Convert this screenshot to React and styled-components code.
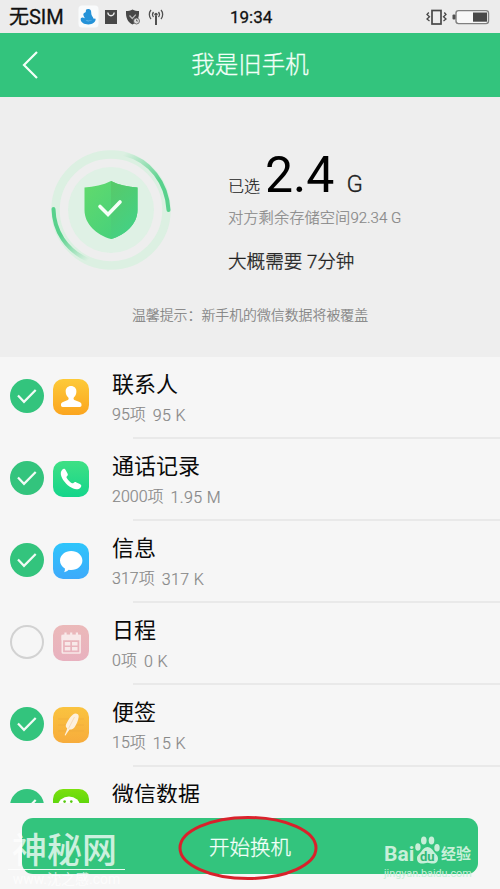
import React from "react";
import styled, { createGlobalStyle } from "styled-components";

const rows = [
  { title: "联系人", count: "95项", size: "95 K", icon: "contact", checked: true },
  { title: "通话记录", count: "2000项", size: "1.95 M", icon: "phone", checked: true },
  { title: "信息", count: "317项", size: "317 K", icon: "message", checked: true },
  { title: "日程", count: "0项", size: "0 K", icon: "calendar", checked: false },
  { title: "便签", count: "15项", size: "15 K", icon: "note", checked: true },
  { title: "微信数据", count: "", size: "", icon: "wechat", checked: true },
];

const tiles = {
  contact: ["#fdca38", "#fba51f"],
  phone: ["#3fe084", "#14d58b"],
  message: ["#2ec5fb", "#3eaafb"],
  calendar: ["#ebb9b9", "#e8b1bf"],
  note: ["#fac33f", "#f7ac3c"],
  wechat: ["#7be00e", "#35c90a"],
};

const Glyph = ({ name }) => (
  <svg width="36" height="36" viewBox="0 0 36 36">
    {name === "contact" && (
      <path
        fill="#fff"
        d="M18 7c3.300 0 5.600 2.300 5.400 5.700-.1 2.400-1 4.300-2.400 5.500-.7.700-.6 2.200.4 2.700l5.100 2.100c1.300.6 2 1.400 2 2.700v.6c0 1.100-.6 1.700-1.700 1.700H9.700C8.600 28 8 27.400 8 26.300v-.6c0-1.300.7-2.100 2-2.700l4.800-2.100c1-.5 1.100-2 .3-2.700-1.400-1.200-2.300-3.100-2.400-5.500C12.500 9.300 14.700 7 18 7z"
      />
    )}
    {name === "phone" && (
      <path
        fill="#fff"
        d="M9.200 8.800c1.600-1.600 2.800-1 3.700.6l1.600 3c.7 1.200.3 2-.6 2.900-.6.600-.5 1.100 0 2 1.100 1.900 2.700 3.500 4.600 4.700.9.500 1.500.5 2-.1.900-.9 1.700-1.200 2.900-.5l3.400 1.700c1.700.9 2.100 2.100.6 3.600-1.800 1.800-4.500 2-7.200.8C15 25.200 10.700 20.800 8.500 15.700c-1.100-2.600-1-5.200.7-6.900z"
      />
    )}
    {name === "message" && (
      <path
        fill="#fff"
        d="M18.200 8C12 8 7 12.200 7 17.500c0 3.300 1.900 6.200 4.900 7.900.1 1.600-.2 2.800-.9 3.800 2-.4 3.700-1.300 4.800-2.400.8.200 1.600.2 2.400.2 6.200 0 11.200-4.200 11.200-9.500S24.400 8 18.200 8z"
      />
    )}
    {name === "calendar" && (
      <g fill="none" stroke="#f8e9e9" strokeWidth="1.600">
        <rect x="9.300" y="10.500" width="17.800" height="17.500" rx="0.800" />
        <path fill="#f8e9e9" d="M9.300 10.500h17.800v4H9.300z" />
        <path strokeWidth="2.200" d="M12.500 7.500v4M18.200 7.500v4M23.900 7.500v4" />
        <path
          fill="#f8e9e9"
          stroke="none"
          d="M11.800 17h5.500v3.600h-5.500zM19 17h5.500v3.600H19zM11.800 22h5.500v3.500h-5.500zM19 22h5.500v3.500H19z"
        />
      </g>
    )}
    {name === "note" && (
      <g>
        <path stroke="#e9a33c" strokeWidth="0.700" opacity="0.6" d="M5 12h26M5 18h26M5 24h26" />
        <path
          fill="#fdf0dc"
          d="M20 7.500c2.300-1.800 6-.8 5.700 2.300-.5 3.900-2 7.200-4.100 10.400-1.100 1.600-3.100 2.400-5 2.300-1.600 2-2.800 3.900-4.100 6-.8-.1-.9-.4-.6-1 1.100-2.400 1.900-4.300 2.300-6.200-2-1.300-1.700-3.200-.6-5.100 1.800-3.500 3.700-6.600 6.400-8.700z"
        />
        <path stroke="#f1cfa4" strokeWidth="0.600" d="M21.500 10 15.500 21.500" />
      </g>
    )}
    {name === "wechat" && (
      <g>
        <ellipse cx="16" cy="17" rx="11" ry="9.500" fill="#fff" />
        <circle cx="11.600" cy="12.600" r="1.300" fill="#58c911" />
        <circle cx="18.300" cy="12.600" r="1.300" fill="#58c911" />
      </g>
    )}
  </svg>
);

const Row = ({ item }) => (
  <RowBox>
    <Check $on={item.checked}>
      {item.checked && (
        <svg width="34" height="34" viewBox="0 0 34 34">
          <path d="M8 16.500l6 6.300L25.700 11" fill="none" stroke="#f2fbf6" strokeWidth="2.200" />
        </svg>
      )}
    </Check>
    <Tile $from={tiles[item.icon][0]} $to={tiles[item.icon][1]}>
      <Glyph name={item.icon} />
    </Tile>
    <RowText>
      <RowTitle>{item.title}</RowTitle>
      <RowInfo>
        <span>{item.count}</span>
        <Size>{item.size}</Size>
      </RowInfo>
    </RowText>
  </RowBox>
);

const StatusIcons = () => (
  <svg width="88" height="24" viewBox="0 0 88 24">
    <rect x="0.500" y="0.500" width="20" height="22" rx="3.500" fill="#f9fbfc" />
    <path
      fill="#2492d8"
      d="M8 4.800C9 3.500 12.500 3.600 13 6c.4 1.800.1 2.500.6 3.900.5 1.400 1.600 2 1.700 3.700l2.300.1c.3 3.400-3 5.700-7.200 5.700-4.400 0-7.600-1.900-7.700-4.900-.1-1.500 1-2.200 2.200-1.900.9.200 1.100.9 1.800.5-.5-1.300-1.700-2.400-1.300-4 .3-1.400 1.900-1.200 2.400-2.300z"
    />
    <path fill="#8cc8ec" d="M7.600 15c2 .9 4.200.9 6.300.1-1.200 1.500-5 1.600-6.300-.1z" />
    <path fill="#484848" d="M27 5h12v14H27z" />
    <path d="M29.800 7.500c.4 4.300 6 4.300 6.400 0" fill="none" stroke="#ececec" strokeWidth="1.300" />
    <path
      fill="#484848"
      d="M54.500 4.500c2 1.200 4.100 1.600 6.500 1.600.3 6.800-1.500 11-6.500 13.400C49.500 17.100 47.700 12.900 48 6.100c2.400 0 4.500-.4 6.500-1.600z"
    />
    <path d="M51.500 10.500l2.800 3 3.500-3.800" fill="none" stroke="#bbb" strokeWidth="1.200" />
    <circle cx="58.500" cy="16" r="3" fill="#ddd" stroke="#555" strokeWidth="0.800" />
    <path d="M58.500 14.500V16h1.500" fill="none" stroke="#555" strokeWidth="0.800" />
    <g fill="none" stroke="#505050" strokeWidth="1.300">
      <path d="M73 5c-2.200 2.400-2.200 6.600 0 9M83 5c2.200 2.400 2.200 6.600 0 9" />
      <path d="M75.500 7c-1.200 1.500-1.200 3.500 0 5M80.500 7c1.200 1.500 1.200 3.500 0 5" />
      <path strokeWidth="2" d="M78 11v9" />
    </g>
    <circle cx="78" cy="9.300" r="1.600" fill="#505050" />
  </svg>
);

const PowerIcons = () => (
  <svg width="66" height="20" viewBox="0 0 66 20">
    <g fill="none" stroke="#484848">
      <rect x="7" y="3.500" width="9" height="13.500" strokeWidth="1.700" />
      <path d="M3.800 5.500 2 7.500l2.500 2.200L2 12l2.500 2M19.300 5.500l1.700 2-2.500 2.200L21 12l-2.500 2" strokeWidth="1.300" />
      <rect x="31" y="3.600" width="32.500" height="13" rx="2.500" stroke="#808080" fill="#f8f8f8" strokeWidth="1.400" />
    </g>
    <rect x="27.500" y="7.500" width="3" height="5" rx="1" fill="#505050" />
    <rect x="48" y="5.500" width="14" height="9.200" fill="#484848" />
  </svg>
);

const ShieldArt = () => (
  <svg width="124" height="124" viewBox="0 0 124 124">
    <defs>
      <linearGradient id="leaf" x1="0" y1="0" x2="1" y2="1">
        <stop offset="0" stopColor="#62da6c" />
        <stop offset="1" stopColor="#3fce80" />
      </linearGradient>
      <linearGradient id="leafDark" x1="0" y1="0" x2="0.500" y2="1">
        <stop offset="0" stopColor="#58c968" />
        <stop offset="1" stopColor="#44d184" />
      </linearGradient>
      <linearGradient id="arcRight" x1="0" y1="0" x2="0.700" y2="1">
        <stop offset="0" stopColor="#58d18c" stopOpacity="0" />
        <stop offset="0.700" stopColor="#58d18c" />
      </linearGradient>
      <linearGradient id="arcLeft" x1="1" y1="1" x2="0.300" y2="0">
        <stop offset="0" stopColor="#58d18c" stopOpacity="0" />
        <stop offset="0.700" stopColor="#58d18c" />
      </linearGradient>
    </defs>
    <circle cx="62" cy="62" r="55.500" fill="none" stroke="#dcf0e2" strokeWidth="8.500" />
    <circle cx="62" cy="62" r="43" fill="#dff1e5" />
    <path d="M75 6c26 6 43 29 44.500 56" fill="none" stroke="url(#arcRight)" strokeWidth="4" strokeLinecap="round" />
    <path d="M4.500 61C5 83 17 102 39 112" fill="none" stroke="url(#arcLeft)" strokeWidth="4" strokeLinecap="round" />
    <path
      fill="url(#leaf)"
      d="M62 33c8 4 17 6 26.500 6.500V62c0 14-12 25-26.500 29-14.500-4-26.500-15-26.500-29V39.500C45 39 54 37 62 33z"
    />
    <path fill="url(#leafDark)" d="M62 33c8 4 17 6 26.500 6.500V62c0 14-12 25-26.500 29z" />
    <path d="M51 58.500l8 8L71 54" fill="none" stroke="#f6fff8" strokeWidth="3.600" strokeLinecap="round" />
  </svg>
);

const Paw = () => (
  <svg width="25" height="28" viewBox="0 0 25 28">
    <g fill="#c8efd9">
      <ellipse cx="8.800" cy="4.500" rx="2.800" ry="4" />
      <ellipse cx="16.500" cy="4.500" rx="2.800" ry="4" />
      <ellipse cx="2.900" cy="11" rx="2.700" ry="3.800" />
      <ellipse cx="22" cy="11.800" rx="2.700" ry="3.800" />
      <path d="M12.500 11c3 0 4.700 2.300 6 4.300 2 2.800 4.500 4 4.500 7.200 0 3-2 5-5 5-2 0-3.600-.8-5.500-.8s-3.500.8-5.500.8c-3 0-5-2-5-5 0-3.200 2.500-4.400 4.500-7.200 1.300-2 3-4.300 6-4.300z" />
    </g>
  </svg>
);

const App = () => {
  return (
    <>
      <GlobalStyle />
      <Phone>
        <StatusBar>
          <Carrier>无SIM</Carrier>
          <StatusIcons />
          <Clock>19:34</Clock>
          <PowerIcons />
        </StatusBar>
        <Header>
          <svg width="18" height="30" viewBox="0 0 18 30">
            <path d="M16 2 3 15l13 13" fill="none" stroke="#f3fff8" strokeWidth="2.200" />
          </svg>
          <HeaderTitle>我是旧手机</HeaderTitle>
        </Header>
        <Summary>
          <SummaryMain>
            <ShieldArt />
            <Figures>
              <Selected>
                <small>已选</small>
                <strong>2.4</strong>
                <span>G</span>
              </Selected>
              <Remaining>
                对方剩余存储空间<span>92.34 G</span>
              </Remaining>
              <Estimate>大概需要 7分钟</Estimate>
            </Figures>
          </SummaryMain>
          <Tip>温馨提示：新手机的微信数据将被覆盖</Tip>
        </Summary>
        <List>
          {rows.map((item) => (
            <Row key={item.title} item={item} />
          ))}
        </List>
        <Footer>
          <StartButton>开始换机</StartButton>
          <Ring viewBox="0 0 140 68">
            <ellipse cx="70" cy="34" rx="68" ry="30.500" fill="none" stroke="#d9212b" strokeWidth="3" />
          </Ring>
          <SiteMark>
            <b>神秘网</b>
            <i>www.沈之感.com</i>
          </SiteMark>
          <BaiduMark>
            <BaiduTop>
              <span>Bai</span>
              <PawBox>
                <Paw />
                <em>du</em>
              </PawBox>
              <b>经验</b>
            </BaiduTop>
            <BaiduUrl>jingyan.baidu.com</BaiduUrl>
          </BaiduMark>
        </Footer>
      </Phone>
    </>
  );
};

export default App;

const GlobalStyle = createGlobalStyle`
  * {
    box-sizing: border-box;
  }
  body {
    margin: 0;
    background: #f6f6f6;
    font-family: Roboto, "Noto Sans CJK SC", sans-serif;
  }
  button {
    font-family: inherit;
  }
  svg {
    display: block;
    flex-shrink: 0;
  }
`;

const Phone = styled.div`
  width: 500px;
  height: 889px;
  display: flex;
  flex-direction: column;
  overflow: hidden;
`;

const StatusBar = styled.div`
  height: 33px;
  display: flex;
  align-items: center;
  padding: 0 9px;
  background: #ececec;
  color: #111;
`;

const Carrier = styled.span`
  width: 69px;
  padding-top: 2px;
  font-size: 20px;
  line-height: 31px;
  white-space: nowrap;
  -webkit-text-stroke: 0.3px #111;
`;

const Clock = styled.span`
  flex: 1;
  padding-left: 64px;
  font-size: 17px;
  -webkit-text-stroke: 0.3px #111;
`;

const Header = styled.div`
  height: 64px;
  display: flex;
  align-items: center;
  padding-left: 21px;
  background: #33c47d;
`;

const HeaderTitle = styled.div`
  flex: 1;
  padding-right: 39px;
  text-align: center;
  color: #f2fff8;
  font-size: 23.500px;
  font-weight: 300;
  line-height: 60px;
  -webkit-text-stroke: 0.3px;
`;

const Summary = styled.div`
  height: 260px;
  flex-shrink: 0;
  background: #eee;
`;

const SummaryMain = styled.div`
  height: 204px;
  display: flex;
  padding: 51px 0 0 49px;
`;

const Figures = styled.div`
  padding-left: 55px;
`;

const Selected = styled.div`
  height: 50px;
  display: flex;
  align-items: baseline;
  color: #222;
  line-height: 54px;

  small {
    font-size: 16px;
    font-weight: 300;
    -webkit-text-stroke: 0.2px;
  }
  strong {
    margin-left: 5px;
    color: #000;
    font-size: 50px;
    font-weight: 400;
  }
  span {
    margin-left: 12px;
    font-size: 24px;
    font-weight: 300;
    -webkit-text-stroke: 0.3px;
  }
`;

const Remaining = styled.div`
  margin-top: 8px;
  color: #888;
  font-size: 15.300px;
  font-weight: 300;
  line-height: 24px;
  -webkit-text-stroke: 0.2px;

  span {
    font-size: 15px;
  }
`;

const Estimate = styled.div`
  margin-top: 18px;
  color: #222;
  font-size: 18.600px;
  font-weight: 300;
  line-height: 28px;
  -webkit-text-stroke: 0.3px;
`;

const Tip = styled.div`
  color: #808080;
  font-size: 13.900px;
  font-weight: 300;
  line-height: 28px;
  text-align: center;
  -webkit-text-stroke: 0.2px;
`;

const List = styled.div`
  height: 446px;
  flex-shrink: 0;
  overflow: hidden;
  background: #f6f6f6;
`;

const RowBox = styled.div`
  height: 82px;
  display: flex;
  align-items: center;
  padding-left: 10px;
  background: linear-gradient(#e9e9e9, #e9e9e9) 133px 100% / 367px 2px no-repeat;
`;

const Check = styled.div`
  width: 34px;
  height: 34px;
  margin-top: -4px;
  border-radius: 50%;
  background: ${(p) => (p.$on ? "#33c47d" : "transparent")};
  border: ${(p) => (p.$on ? "none" : "2px solid #d2d2d2")};
`;

const Tile = styled.div`
  width: 36px;
  height: 36px;
  margin: -2px 0 0 9px;
  border-radius: 10px;
  overflow: hidden;
  background: linear-gradient(${(p) => p.$from}, ${(p) => p.$to});
`;

const RowText = styled.div`
  height: 82px;
  padding: 12px 0 0 23px;
`;

const RowTitle = styled.div`
  color: #0a0a0a;
  font-size: 22px;
  line-height: 32px;
`;

const RowInfo = styled.div`
  display: flex;
  gap: 7px;
  color: #888;
  font-size: 16px;
  font-weight: 300;
  line-height: 27px;
  -webkit-text-stroke: 0.2px;
`;

const Size = styled.span`
  padding-top: 1px;
  letter-spacing: 0.4px;
`;

const Footer = styled.div`
  position: relative;
  height: 86px;
  padding: 15px 22px 0;
  background: #f6f6f6;
`;

const StartButton = styled.button`
  width: 456px;
  height: 56px;
  border: 0;
  border-radius: 11px;
  background: #33c47d;
  color: #f2fff8;
  font-size: 20.500px;
  font-weight: 300;
  -webkit-text-stroke: 0.3px;
`;

/* hand-drawn ring over the button */
const Ring = styled.svg`
  position: absolute;
  left: 178px;
  top: 11px;
  width: 140px;
  height: 68px;
`;

const SiteMark = styled.div`
  position: absolute;
  left: 8px;
  top: 27px;
  width: 117px;
  color: rgba(255, 255, 255, 0.75);

  b {
    display: block;
    height: 40px;
    padding-left: 4px;
    border-bottom: 1px solid rgba(255, 255, 255, 0.9);
    font-size: 35px;
    font-weight: 500;
    line-height: 43px;
    white-space: nowrap;
  }
  i {
    display: block;
    padding-top: 1px;
    font-size: 14px;
    font-style: normal;
    line-height: 17px;
    text-align: center;
  }
`;

const BaiduMark = styled.div`
  position: absolute;
  left: 384px;
  top: 32px;
  color: #c8efd9;
`;

const BaiduTop = styled.div`
  height: 31px;
  display: flex;
  align-items: flex-end;

  > span {
    width: 31px;
    font-size: 21px;
    font-weight: 700;
    line-height: 24px;
  }
  > b {
    margin-left: 1px;
    font-size: 15px;
    font-weight: 700;
    line-height: 23px;
  }
`;

const PawBox = styled.div`
  position: relative;
  padding-bottom: 2px;

  em {
    position: absolute;
    left: 5px;
    bottom: 2px;
    color: #33b877;
    font-size: 13px;
    font-style: normal;
    font-weight: 700;
    line-height: 15px;
  }
`;

const BaiduUrl = styled.div`
  font-size: 10.800px;
  line-height: 15px;
`;
